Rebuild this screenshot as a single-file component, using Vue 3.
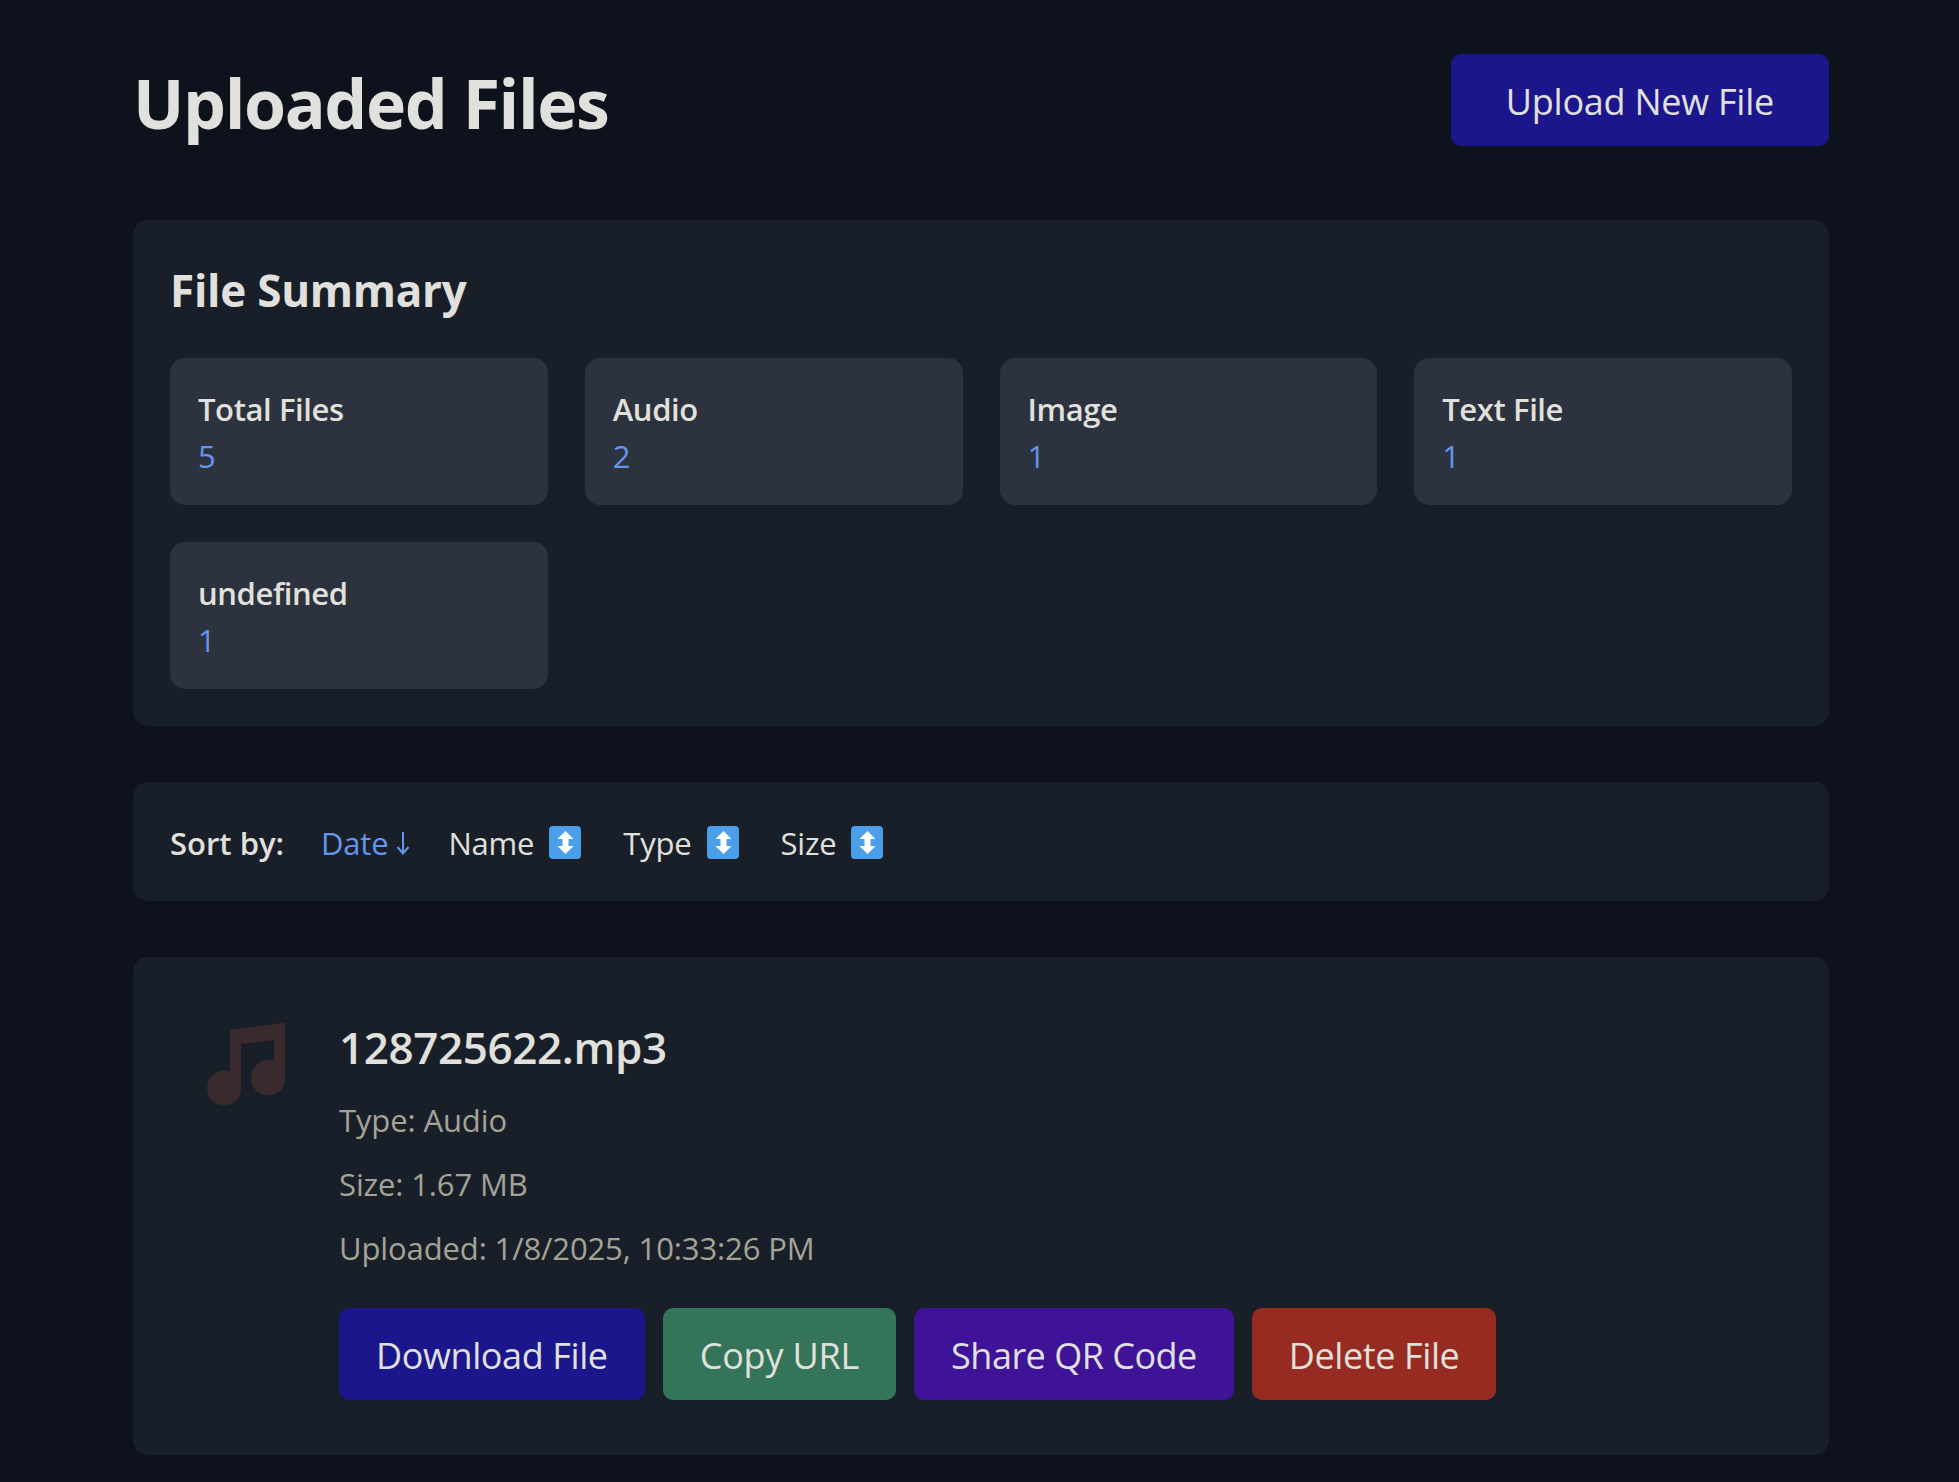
<script setup>
const stats = [
  { label: "Total Files", value: 5 },
  { label: "Audio", value: 2 },
  { label: "Image", value: 1 },
  { label: "Text File", value: 1 },
  { label: "undefined", value: 1 },
];
const sorts = ["Name", "Type", "Size"];
</script>

<template>
  <div class="page">
    <header class="head">
      <h1>Uploaded Files</h1>
      <button class="btn blue top-btn">Upload New File</button>
    </header>

    <section class="panel summary">
      <h2>File Summary</h2>
      <div class="stats">
        <div v-for="s in stats" :key="s.label" class="stat">
          <div class="stat-label">{{ s.label }}</div>
          <div class="stat-value">{{ s.value }}</div>
        </div>
      </div>
    </section>

    <section class="panel sortbar">
      <span class="sort-label">Sort by:</span>
      <span class="sort active">
        Date
        <svg class="down" viewBox="0 0 14 24">
          <path d="M7 1V22M1.500 16 7 22.500 12.500 16" fill="none" stroke="#6495ed" stroke-width="2" />
        </svg>
      </span>
      <span v-for="s in sorts" :key="s" class="sort">
        {{ s }}
        <svg class="updown" viewBox="0 0 32 33">
          <rect width="32" height="33" rx="4" fill="#4a9fe8" />
          <path d="M16.500 5 24.500 13H19.500V20H24.500L16.500 28 8.500 20H13.500V13H8.500Z" fill="#fff" />
        </svg>
      </span>
    </section>

    <section class="panel file">
      <svg class="note" viewBox="0 0 78 82">
        <path
          fill="#3a292d"
          d="M23 7 76 0Q78 0 78 2V56C78 66 70 72 61 72 52 72 44 66 44 55 44 45 52 37 61 37 63 37 65 37 67 38V17L34 21V67C34 76 26 82 17 82 8 82 0 76 0 65 0 55 8 48 17 48 19 48 21 48 23 49Z"
        />
      </svg>
      <div class="file-body">
        <h3>128725622.mp3</h3>
        <p>Type: Audio</p>
        <p>Size: 1.67 MB</p>
        <p>Uploaded: 1/8/2025, 10:33:26 PM</p>
        <div class="actions">
          <button class="btn blue">Download File</button>
          <button class="btn green">Copy URL</button>
          <button class="btn purple">Share QR Code</button>
          <button class="btn red">Delete File</button>
        </div>
      </div>
    </section>
  </div>
</template>

<style>
html,
body {
  margin: 0;
  background: #0e121c;
}
</style>

<style scoped>
.page {
  box-sizing: border-box;
  height: 1482px;
  overflow: hidden;
  padding: 54px 130px 0 133px;
  color: #e0e0dc;
  font-family: "Open Sans", "Noto Sans", sans-serif;
}

.head {
  display: flex;
  justify-content: space-between;
  align-items: center;
  margin-bottom: 74px;
}

h1 {
  margin: 0;
  font-size: 68px;
  line-height: 92px;
  font-weight: 700;
  letter-spacing: -1.4px;
  padding-top: 3px;
  height: 89px;
}

.btn {
  border: 0;
  border-radius: 10px;
  height: 92px;
  padding: 2px 37px 0;
  color: #e0e0dc;
  font: inherit;
  font-size: 36px;
  letter-spacing: -0.4px;
}

.top-btn {
  padding: 2px 55px 0;
  letter-spacing: -0.25px;
}

.blue {
  background: #1c168d;
}

.green {
  background: #347458;
  letter-spacing: -0.2px;
}

.purple {
  background: #3f1397;
  letter-spacing: -0.5px;
}

.red {
  background: #972b22;
}

.panel {
  background: #191f29;
  border-radius: 15px;
}

.summary {
  padding: 37px;
  margin-bottom: 56px;
}

h2 {
  margin: 0 0 36px;
  padding-top: 1px;
  height: 64px;
  font-size: 44px;
  line-height: 65px;
  font-weight: 700;
  letter-spacing: -0.25px;
}

.stats {
  display: grid;
  grid-template-columns: repeat(4, 1fr);
  gap: 37px;
}

.stat {
  background: #2c323e;
  border-radius: 15px;
  height: 147px;
  box-sizing: border-box;
  padding: 28px 28px;
}

.stat-label {
  font-size: 31px;
  line-height: 47px;
  font-weight: 600;
  letter-spacing: -0.4px;
}

.stat-value {
  font-size: 31px;
  line-height: 47px;
  color: #6495ed;
}

.sortbar {
  display: flex;
  align-items: center;
  height: 119px;
  padding: 2px 37px 0;
  box-sizing: border-box;
  margin-bottom: 56px;
  font-size: 31px;
}

.sort-label {
  font-weight: 600;
  margin-right: 37px;
}

.sort {
  display: inline-flex;
  align-items: center;
  gap: 15px;
  margin-right: 42px;
  letter-spacing: -0.2px;
}

.active {
  color: #6495ed;
  gap: 8px;
  margin-right: 38px;
}

.down {
  width: 14px;
  height: 24px;
}

.updown {
  width: 32px;
  height: 33px;
}

.file {
  display: flex;
  height: 498px;
  box-sizing: border-box;
  padding: 66px 74px;
  gap: 54px;
}

.note {
  flex: none;
  width: 78px;
  height: 82px;
}

.file-body {
  flex: 1;
}

h3 {
  margin: -1px 0 25px;
  font-size: 44px;
  line-height: 50px;
  font-weight: 600;
  letter-spacing: -0.4px;
}

p {
  margin: 0 0 17px;
  font-size: 31px;
  line-height: 47px;
  color: #a3a396;
  letter-spacing: -0.12px;
}

.actions {
  display: flex;
  gap: 18px;
  margin-top: 36px;
}
</style>
